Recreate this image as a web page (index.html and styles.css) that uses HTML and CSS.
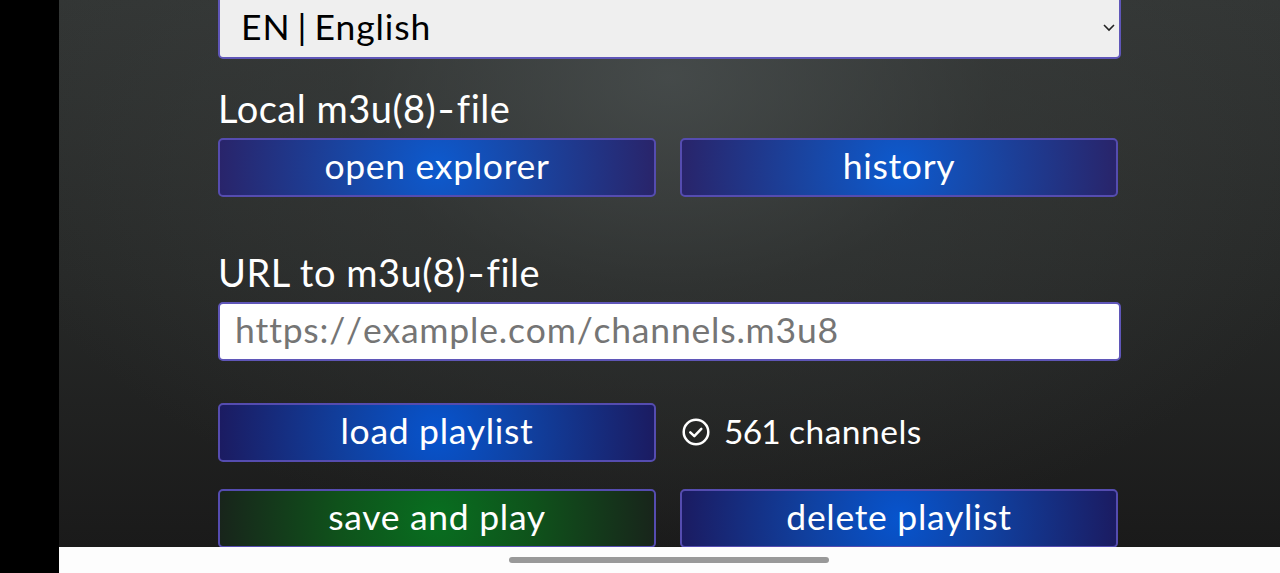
FILE: index.html
```
<!DOCTYPE html>
<html lang="en">
<head>
<meta charset="utf-8">
<title>Playlist settings</title>
<link rel="stylesheet" href="styles.css">
</head>
<body>
<div class="cutout"></div>
<div class="screen">
  <div class="settings">
    <div class="form">
      <div class="select-wrap">
        <select class="field lang">
          <option>EN | English</option>
        </select>
        <svg class="arrow" viewBox="0 0 12 8"><path d="M1 1l5 5 5-5"/></svg>
      </div>

      <label class="label local">Local m3u(8)<span class="dash">-</span>file</label>
      <div class="row">
        <button class="btn light">open explorer</button>
        <button class="btn light">history</button>
      </div>

      <label class="label url" for="url">URL to m3u(8)<span class="dash">-</span>file</label>
      <input class="field" id="url" type="text" placeholder="https://example.com/channels.m3u8">

      <div class="row load">
        <button class="btn">load playlist</button>
        <div class="status">
          <svg class="check" viewBox="0 0 28 28"><circle cx="14" cy="14" r="12.3"/><path d="M8.3 14.3l4 3.8 7-7.2"/></svg>
          <span><span class="count">561</span> channels</span>
        </div>
      </div>

      <div class="row save">
        <button class="btn green">save and play</button>
        <button class="btn">delete playlist</button>
      </div>
    </div>
  </div>
  <div class="navbar"><div class="handle"></div></div>
</div>
</body>
</html>
```

FILE: styles.css
```
*{box-sizing:border-box;margin:0;padding:0;}
body{display:flex;height:573px;overflow:hidden;background:#000;color:#fff;font-family:Lato,"Liberation Sans",sans-serif;}
.cutout{width:59px;background:#000;}
.screen{flex:1;display:flex;flex-direction:column;}
.settings{height:547px;overflow:hidden;background:radial-gradient(ellipse 720px 480px at 50% 14%,rgba(76,82,82,.75) 0%,rgba(60,64,63,.4) 45%,rgba(40,40,40,0) 100%),linear-gradient(#323534 0%,#272928 50%,#1a1a1a 100%);}
.form{width:903px;margin-left:159px;}

.field{display:block;width:903px;height:59px;border:2px solid #5f56b8;border-radius:5px;font-family:inherit;font-size:35.5px;outline:none;}
.select-wrap{display:flow-root;position:relative;height:59px;}
.lang{appearance:none;height:65px;margin-top:-6px;padding:0 21px 1px;background:#efefef;color:#000;letter-spacing:.9px;word-spacing:-2.8px;}
.arrow{position:absolute;right:6px;top:24px;width:12px;height:8px;fill:none;stroke:#222;stroke-width:1.6;}
#url{padding:0 15px 4px;background:#fff;letter-spacing:.8px;font-kerning:none;}
#url::placeholder{color:#757575;}

.label{display:block;height:52px;font-size:38px;line-height:44px;letter-spacing:.5px;white-space:nowrap;}
.local{margin-top:27px;}
.url{margin-top:53px;}
.dash{display:inline-block;transform:scaleX(1.25);margin:0 3px;}

.row{display:flex;gap:24px;width:900px;}
.load{margin-top:42px;}
.save{margin-top:27px;}
.btn{width:438px;height:59px;padding-bottom:4px;border:2px solid #554cb0;border-radius:5px;background:radial-gradient(ellipse 219px 240px at center,#0754cd 0%,#10409f 42%,#1b1b61 100%);color:#fff;font-family:inherit;font-size:35.5px;letter-spacing:.7px;white-space:nowrap;}
.light{background:radial-gradient(ellipse 219px 240px at center,#0d5ace 0%,#1945a2 42%,#29246a 100%);}
.green{background:radial-gradient(ellipse 219px 240px at center,#086f20 0%,#0f521b 45%,#18241b 100%);}

.status{display:flex;align-items:center;padding:0 0 2px 2px;font-size:33.5px;line-height:38px;letter-spacing:.5px;}
.status span{position:relative;top:-.5px;}
.check{width:28px;height:28px;margin-right:14px;fill:none;stroke:#fff;stroke-width:2.5;stroke-linecap:round;stroke-linejoin:round;}
.count{letter-spacing:-.8px;}

.navbar{display:flex;justify-content:center;height:26px;padding:10px 2px 0 0;background:#fdfdfd;}
.handle{width:320px;height:6px;border-radius:3px;background:#999;}
```
